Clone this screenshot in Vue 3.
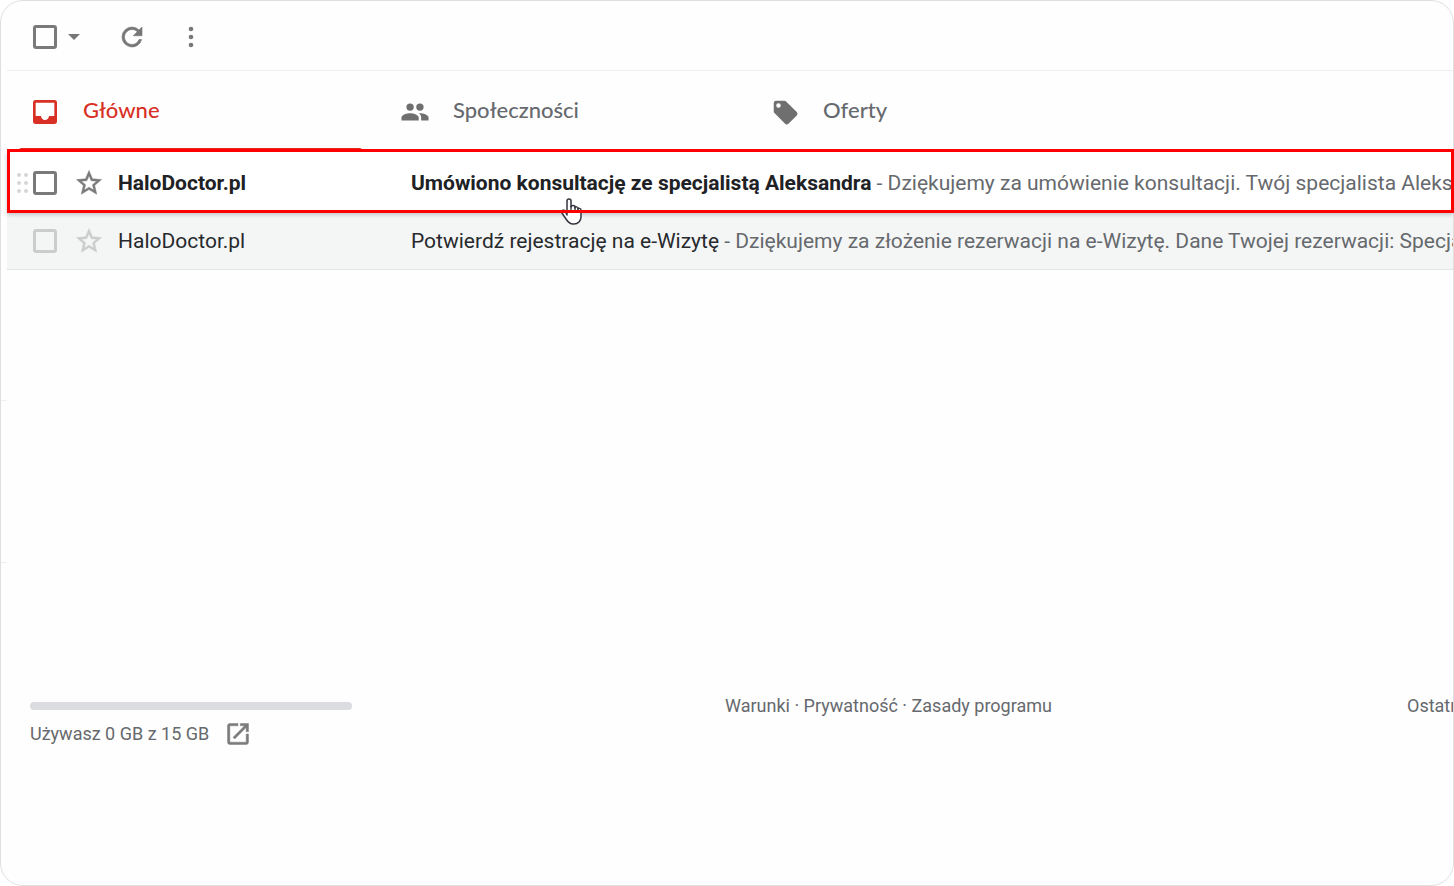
<script setup>
import { ref } from 'vue'

const tabs = [
  { name: 'Główne', icon: 'inbox', box: '0 0 24 24' },
  { name: 'Społeczności', icon: 'people', box: '-1 -1 26 26' },
  { name: 'Oferty', icon: 'tag', box: '-2 -2 27 27' },
]
const active = ref('Główne')

const mails = ref([
  {
    sender: 'HaloDoctor.pl',
    subject: 'Umówiono konsultację ze specjalistą Aleksandra',
    preview: 'Dziękujemy za umówienie konsultacji. Twój specjalista Aleksandra',
    unread: true,
    checked: false,
  },
  {
    sender: 'HaloDoctor.pl',
    subject: 'Potwierdź rejestrację na e-Wizytę',
    preview: 'Dziękujemy za złożenie rezerwacji na e-Wizytę. Dane Twojej rezerwacji: Specjalista',
    unread: false,
    checked: false,
  },
])
</script>

<template>
  <div class="window">
    <div class="rail"><i class="rail-upper"></i><i class="rail-lower"></i></div>
    <div class="content">
      <header class="toolbar">
        <input class="check" type="checkbox" aria-label="Zaznacz wszystko" />
        <button class="tool caret" aria-label="Opcje zaznaczania">
          <svg width="12" height="6" viewBox="0 0 12 6"><path d="M0 0h12L6 6z" fill="currentColor" /></svg>
        </button>
        <button class="tool refresh" aria-label="Odśwież">
          <svg width="30" height="30" viewBox="0 0 24 24"><path fill="currentColor" stroke="currentColor" stroke-width=".5" d="M17.65 6.35A7.96 7.96 0 0 0 12 4a8 8 0 1 0 7.73 10h-2.08A6 6 0 1 1 12 6c1.66 0 3.14.69 4.22 1.78L13 11h7V4z" /></svg>
        </button>
        <button class="tool more" aria-label="Więcej">
          <svg width="6" height="22" viewBox="0 0 6 22" fill="currentColor"><circle cx="3" cy="3" r="2.3" /><circle cx="3" cy="11" r="2.3" /><circle cx="3" cy="19" r="2.3" /></svg>
        </button>
      </header>

      <nav class="tabs">
        <button
          v-for="tab in tabs"
          :key="tab.name"
          class="tab"
          :class="{ active: tab.name === active }"
          @click="active = tab.name"
        >
          <svg class="tab-icon" width="32" height="32" :viewBox="tab.box" fill="currentColor" aria-hidden="true">
            <path v-if="tab.icon === 'inbox'" d="M19 3H5a2 2 0 0 0-2 2v14a2 2 0 0 0 2 2h14a2 2 0 0 0 2-2V5a2 2 0 0 0-2-2zm0 12h-4c0 1.660-1.350 3-3 3s-3-1.340-3-3H5V5h14z" />
            <path v-else-if="tab.icon === 'people'" d="M16 11a3 3 0 1 0 0-6 3 3 0 0 0 0 6zM8 11a3 3 0 1 0 0-6 3 3 0 0 0 0 6zm0 2c-2.330 0-7 1.170-7 3.500V19h14v-2.500C15 14.170 10.330 13 8 13zm8 0c-.29 0-.62.020-.97.050 1.160.840 1.970 1.970 1.970 3.450V19h6v-2.500c0-2.330-4.670-3.500-7-3.500z" />
            <path v-else d="M21.410 11.580l-9-9A2 2 0 0 0 11 2H4a2 2 0 0 0-2 2v7c0 .55.220 1.050.59 1.420l9 9a2 2 0 0 0 2.820 0l7-7a2 2 0 0 0 0-2.840zM6 8a1.900 1.900 0 1 1 0-3.800 1.900 1.900 0 0 1 0 3.800z" />
          </svg>
          <span>{{ tab.name }}</span>
        </button>
      </nav>

      <ul class="mails">
        <li v-for="mail in mails" :key="mail.subject" class="mail" :class="{ unread: mail.unread }">
          <svg class="grip" width="12" height="22" viewBox="0 0 12 22" fill="currentColor" aria-hidden="true">
            <circle cx="2" cy="3" r="2" /><circle cx="9" cy="3" r="2" />
            <circle cx="2" cy="11" r="2" /><circle cx="9" cy="11" r="2" />
            <circle cx="2" cy="19" r="2" /><circle cx="9" cy="19" r="2" />
          </svg>
          <input v-model="mail.checked" class="check" type="checkbox" :aria-label="'Zaznacz: ' + mail.subject" />
          <button class="star" aria-label="Oznacz gwiazdką">
            <svg width="30" height="30" viewBox="0 0 24 24"><path fill="currentColor" stroke="currentColor" stroke-width=".4" d="M22 9.240l-7.190-.62L12 2 9.190 8.630 2 9.240l5.460 4.730L5.820 21 12 17.270 18.180 21l-1.630-7.030zM12 15.400l-3.760 2.270 1-4.280-3.320-2.880 4.380-.38L12 6.100l1.710 4.040 4.380.38-3.320 2.880 1 4.280z" /></svg>
          </button>
          <span class="sender">{{ mail.sender }}</span>
          <a class="summary" href="#"><span class="subject">{{ mail.subject }}</span> - {{ mail.preview }}</a>
          <svg v-if="mail.unread" class="pointer" width="24" height="30" viewBox="0 0 24 30" aria-hidden="true">
            <path d="M7 18V4a2 2 0 0 1 4 0v6c0-2 4-2 4 0v1c0-2 3-1 3 0v1c0-1 3-1 3 1v7c0 4-3 7-7 7h-1c-3 0-5-2-7-5l-4-6c-1-2 1-4 3-2z" fill="#fff" stroke="#34343f" stroke-width="1.500" stroke-linejoin="round" />
            <path d="M11 9v5M15 10v4M18 11v4" fill="none" stroke="#34343f" stroke-width="1.300" />
          </svg>
        </li>
      </ul>

      <footer class="footer">
        <div class="storage">
          <div class="bar"></div>
          <div class="usage">
            <span>Używasz 0 GB z 15 GB</span>
            <a href="#" class="open" aria-label="Zarządzaj miejscem">
              <svg width="28" height="28" viewBox="0 0 24 24"><path fill="currentColor" stroke="currentColor" stroke-width=".4" d="M19 19H5V5h7V3H5a2 2 0 0 0-2 2v14a2 2 0 0 0 2 2h14a2 2 0 0 0 2-2v-7h-2zM14 3v2h3.590l-9.830 9.830 1.410 1.410L19 6.410V10h2V3z" /></svg>
            </a>
          </div>
        </div>
        <div class="links"><a href="#">Warunki</a> · <a href="#">Prywatność</a> · <a href="#">Zasady programu</a></div>
        <div class="activity">Ostatnia aktywność konta</div>
      </footer>
    </div>
  </div>
</template>

<style>
body { background: #fff; }
</style>

<style scoped>
* { box-sizing: border-box; }
.window {
  display: flex;
  min-height: 100vh;
  border: 1px solid #dfdfdf;
  border-radius: 23px;
  background: #fefefe;
  font-family: Roboto, "Noto Sans", sans-serif;
  color: #66696d;
}
.rail { flex: none; width: 6px; }
.rail i { display: block; border-bottom: 1px solid #eef0f0; }
.rail-upper { height: 400px; }
.rail-lower { height: 162px; }
.content {
  flex: 1;
  min-width: 0;
  display: flex;
  flex-direction: column;
}
button {
  display: flex;
  align-items: center;
  justify-content: center;
  padding: 0;
  border: 0;
  background: none;
  color: inherit;
  font: inherit;
  cursor: pointer;
}
a { color: inherit; text-decoration: none; }
svg { display: block; }
.check {
  appearance: none;
  flex: none;
  width: 24px;
  height: 24px;
  margin: 0;
  border: 3px solid #7a7a7a;
  border-radius: 3px;
}
.check:checked { background: #7a7a7a; }
.toolbar {
  display: flex;
  align-items: center;
  height: 70px;
  padding: 2px 0 0 26px;
  border-bottom: 1px solid #eceff0;
  color: #777;
}
.tool { height: 32px; }
.caret { width: 12px; margin-left: 11px; }
.refresh { width: 32px; margin-left: 36px; }
.more { width: 22px; margin-left: 32px; }

.tabs { display: flex; height: 80px; }
.tab {
  position: relative;
  width: 370px;
  justify-content: flex-start;
  gap: 22px;
  padding: 0 0 2px 22px;
  font: 500 22px/30px Lato, "Open Sans", sans-serif;
  color: #66696d;
}
.tab-icon { margin-top: 4px; color: #6f6f6f; }
.active, .active .tab-icon { color: #d93025; }
.active::after {
  content: "";
  position: absolute;
  left: 11px;
  right: 14px;
  bottom: -2px;
  height: 5px;
  border-radius: 4px 4px 0 0;
  background: #e0261c;
}

.mails { margin: 0; padding: 0; list-style: none; }
.mail {
  position: relative;
  display: flex;
  align-items: center;
  height: 57px;
  padding-left: 10px;
  border-bottom: 1px solid #e3e7e7;
  background: #f4f6f6;
  font-size: 21px;
  line-height: 28px;
}
.mail .check { margin-left: 4px; border-color: #ccc; }
.grip { flex: none; color: transparent; }
.star { flex: none; width: 30px; margin-left: 17px; color: #ccc; }
.sender {
  flex: none;
  width: 293px;
  margin-left: 14px;
  color: #27292c;
}
.summary { flex: 1; min-width: 0; overflow: hidden; white-space: nowrap; }
.subject { color: #27292c; }
.unread {
  height: 62px;
  padding-top: 1px;
  border: 0;
  background: #fff;
  box-shadow: 0 2px 4px #c4c8c8;
  z-index: 1;
}
.unread .check { border-color: #7a7a7a; }
.unread .grip { color: #d6d6d6; }
.unread .star { color: #7a7a7a; }
.unread .sender, .unread .subject { color: #202124; font-weight: 700; }
.unread::after {
  content: "";
  position: absolute;
  inset: -2px -1px 0 0;
  border: 3px solid #f00;
  pointer-events: none;
}
.pointer { position: absolute; left: 553px; top: 46px; }

.footer {
  display: grid;
  grid-template-columns: 340px 1fr 46px;
  margin-top: 424px;
  padding-left: 23px;
  font-size: 18px;
  line-height: 24px;
  white-space: nowrap;
}
.storage { width: 322px; padding-top: 8px; }
.bar { height: 8px; border-radius: 4px; background: #dadce0; }
.usage { display: flex; align-items: center; gap: 15px; height: 40px; margin-top: 4px; }
.open { color: #7b7b7b; }
.links { text-align: center; }
.activity { overflow: hidden; }
</style>
